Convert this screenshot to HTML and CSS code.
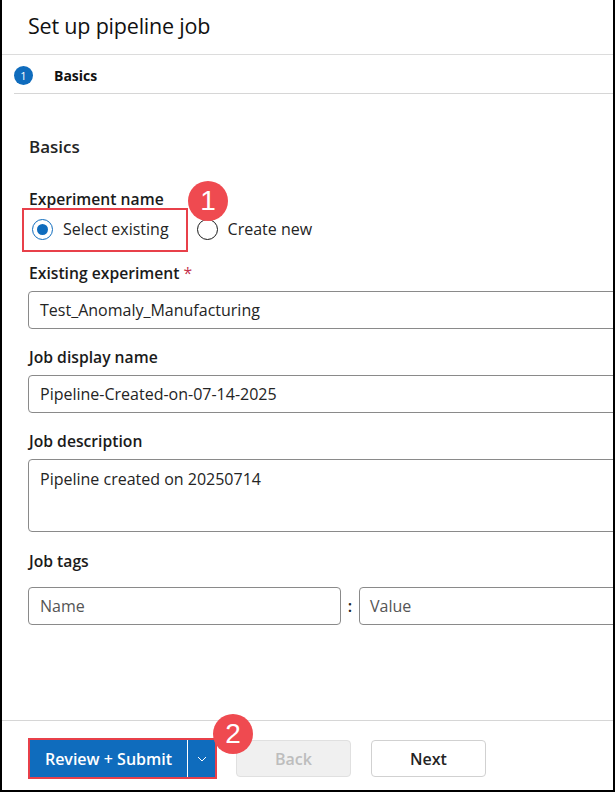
FILE: index.html
```html
<!DOCTYPE html>
<html lang="en">
<head>
<meta charset="utf-8">
<title>Set up pipeline job</title>
<link rel="stylesheet" href="styles.css">
</head>
<body>
<div class="panel">
  <header class="panel-header">
    <h1 class="title">Set up pipeline job</h1>
  </header>
  <div class="steps">
    <div class="step">
      <span class="step-num">1</span>
      <span class="step-label">Basics</span>
    </div>
  </div>
  <main class="content">
    <h2 class="section-title">Basics</h2>

    <div class="field field-radio">
      <div class="label">Experiment name</div>
      <div class="radio-row">
        <label class="radio checked"><span class="radio-ring"><span class="radio-dot"></span></span><span>Select existing</span></label>
        <label class="radio"><span class="radio-ring"></span><span>Create new</span></label>
        <span class="callout-box callout-box-1"></span>
        <span class="badge badge-1">1</span>
      </div>
    </div>

    <div class="field">
      <div class="label">Existing experiment <span class="req">*</span></div>
      <div class="input">Test_Anomaly_Manufacturing</div>
    </div>

    <div class="field">
      <div class="label">Job display name</div>
      <div class="input">Pipeline-Created-on-07-14-2025</div>
    </div>

    <div class="field">
      <div class="label">Job description</div>
      <div class="input textarea">Pipeline created on 20250714</div>
    </div>

    <div class="field field-tags">
      <div class="label">Job tags</div>
      <div class="tag-row">
        <div class="input tag-name placeholder">Name</div>
        <span class="colon">:</span>
        <div class="input tag-value placeholder">Value</div>
      </div>
    </div>
  </main>
  <footer class="footer">
    <div class="split-wrap">
      <div class="split-btn">
        <span class="split-main">Review + Submit</span>
        <span class="split-arrow">
          <svg width="10" height="6" viewBox="0 0 10 6"><path d="M1 1l4 4 4-4" fill="none" stroke="#fff" stroke-width="1"/></svg>
        </span>
      </div>
      <span class="badge badge-2">2</span>
    </div>
    <button class="btn btn-disabled">Back</button>
    <button class="btn btn-default">Next</button>
  </footer>
</div>
</body>
</html>
```

FILE: styles.css
```css
* { box-sizing: border-box; }
html, body { margin: 0; padding: 0; background: #fff; }
body {
  font-family: "Open Sans", "Noto Sans", "Liberation Sans", sans-serif;
  color: #242424;
}
.panel {
  width: 615px;
  height: 792px;
  border-left: 2px solid #000;
  border-right: 2px solid #000;
  border-bottom: 2px solid #000;
  display: flex;
  flex-direction: column;
  overflow: hidden;
}
.panel-header {
  height: 55px;
  border-bottom: 1px solid #dcdcdc;
  display: flex;
  align-items: center;
  padding-left: 26px;
  padding-bottom: 4px;
}
.title {
  margin: 0;
  font-size: 21.5px;
  font-weight: 400;
  letter-spacing: -0.2px;
  color: #111;
}
.steps {
  padding-left: 12px;
}
.step {
  height: 39px;
  border-bottom: 1px solid #d6d6d6;
  display: flex;
  align-items: center;
  padding-top: 2px;
}
.step-num {
  width: 19px;
  height: 19px;
  border-radius: 50%;
  background: #0f6cbd;
  color: #fff;
  font-size: 11px;
  display: flex;
  align-items: center;
  justify-content: center;
  line-height: 1;
}
.step-label {
  margin-left: 21px;
  font-size: 14px;
  font-weight: 700;
  color: #111;
}
.content {
  flex: 1;
  padding: 39px 0 0 26px;
}
.section-title {
  margin: 0 0 28px 1px;
  font-size: 17px;
  font-weight: 600;
  line-height: 28px;
}
.label {
  font-size: 15.7px;
  font-weight: 600;
  line-height: 20px;
  margin-left: 1px;
  margin-bottom: 8px;
  color: #1b1b1b;
}
.req { color: #c4314b; font-weight: 400; }
.field { margin-bottom: 18px; }
.field-radio { margin-bottom: 14px; }
.field-radio .label { margin-bottom: 0; }
.radio-row {
  position: relative;
  display: flex;
  align-items: center;
  height: 40px;
}
.radio {
  display: flex;
  align-items: center;
  font-size: 16px;
  margin-left: 4px;
}
.radio + .radio { margin-left: 28px; }
.radio-ring {
  width: 21px;
  height: 21px;
  border-radius: 50%;
  border: 1px solid #1a1a1a;
  display: flex;
  align-items: center;
  justify-content: center;
  margin-right: 10px;
}
.radio.checked .radio-ring { border-color: #0f6cbd; }
.radio-dot {
  width: 11px;
  height: 11px;
  border-radius: 50%;
  background: #0f6cbd;
}
.callout-box {
  position: absolute;
  border: 2px solid #e8404a;
  pointer-events: none;
}
.callout-box-1 {
  left: -6px;
  top: -1px;
  width: 166px;
  height: 44px;
}
.badge {
  position: absolute;
  width: 40px;
  height: 40px;
  border-radius: 50%;
  background: #ef4a50;
  color: #fff;
  font-family: "Liberation Sans", Arial, sans-serif;
  font-size: 28px;
  display: flex;
  align-items: center;
  justify-content: center;
  line-height: 1;
}
.badge-1 { left: 160px; top: -28px; }
.input {
  height: 38px;
  border: 1px solid #8a8a8a;
  border-radius: 4px;
  width: calc(100% + 20px);
  padding: 0 11px;
  display: flex;
  align-items: center;
  font-size: 16px;
  color: #242424;
}
.textarea {
  height: 73px;
  align-items: flex-start;
  padding-top: 8px;
}
.field-tags .label { margin-bottom: 16px; }
.field-tags { margin-top: 19px; }
.tag-row {
  display: flex;
  align-items: center;
}
.tag-row .input.tag-name { width: 313px; flex: none; }
.tag-row .input.tag-value { width: 300px; flex: none; padding-left: 10px; }
.placeholder { color: #555; }
.colon {
  flex: none;
  width: 18px;
  text-align: center;
  font-size: 16px;
  font-weight: 600;
}
.footer {
  height: 70px;
  border-top: 1px solid #d6d6d6;
  display: flex;
  align-items: flex-start;
  padding: 17px 0 0 26px;
}
.split-wrap {
  position: relative;
  border: 2px solid #e8404a;
  height: 41px;
}
.split-btn {
  display: flex;
  height: 37px;
  background: #0f6cbd;
  color: #fff;
  font-size: 16px;
  font-weight: 600;
}
.split-main {
  width: 158px;
  display: flex;
  align-items: center;
  justify-content: center;
  border-right: 1px solid #fff;
}
.split-arrow {
  width: 27px;
  display: flex;
  align-items: center;
  justify-content: center;
}
.badge-2 { left: 183px; top: -26px; }
.btn {
  height: 37px;
  margin-top: 2px;
  border-radius: 4px;
  font-family: inherit;
  font-size: 16px;
  font-weight: 600;
  width: 115px;
  padding: 0;
}
.btn-disabled {
  margin-left: 19px;
  background: #f0f0f0;
  border: 1px solid #e0e0e0;
  color: #bdbdbd;
}
.btn-default {
  margin-left: 20px;
  background: #fff;
  border: 1px solid #d1d1d1;
  color: #242424;
}
```
